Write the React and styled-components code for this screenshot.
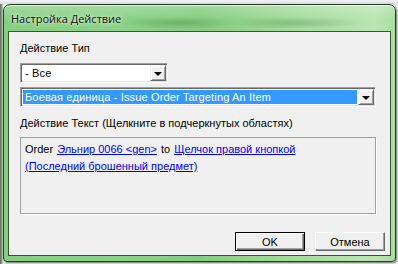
import styled, { createGlobalStyle } from "styled-components";

const GlobalStyle = createGlobalStyle`
  html, body {
    margin: 0;
    padding: 0;
  }
  body {
    background: #e6e6e6;
    font-family: "Liberation Sans", Arial, sans-serif;
  }
`;

const Desktop = styled.div`
    width: 398px;
    height: 264px;
    overflow: hidden;
    box-sizing: border-box;
    padding: 4px 0 0 3px;
    background:
        linear-gradient(180deg, #f4f4f4 0, #d9dce6 4px, transparent 4px),
        linear-gradient(90deg, #5d6e5b 0, #8aa487 2px, #ececec 3px);
`;

const Window = styled.div`
    width: 393px;
    height: 258px;
    box-sizing: border-box;
    border: 1px solid #2b3a2a;
    border-radius: 7px 7px 4px 4px;
    padding: 0 4px 5px;
    display: flex;
    flex-direction: column;
    background:
        radial-gradient(ellipse 60px 6px at 175px 18px, rgba(70, 120, 70, 0.35), transparent),
        radial-gradient(ellipse 70px 6px at 290px 18px, rgba(70, 120, 70, 0.3), transparent),
        linear-gradient(180deg, rgba(255, 255, 255, 0.25), rgba(255, 255, 255, 0) 14px),
        linear-gradient(90deg, #86cf80 0%, #8bd286 30%, #84cd7f 50%, #a4dc9c 75%, #b9e6b1 95%, #a8dea0 100%);
    box-shadow: 1px 1px 2px rgba(0, 0, 0, 0.5), inset 0 1px 0 rgba(255, 255, 255, 0.6);
`;

const TitleBar = styled.div`
    height: 26px;
    display: flex;
    align-items: center;
    padding-left: 3px;
    font-family: "Open Sans", "Noto Sans", sans-serif;
    font-size: 11px;
    color: #101010;
    text-shadow: 0 0 6px rgba(255, 255, 255, 0.9), 0 0 3px rgba(255, 255, 255, 0.7);
`;

const Client = styled.div`
    flex: 1;
    display: flex;
    flex-direction: column;
    border: 1px solid #3a5437;
    background: #f0f0f0;
    padding: 0 5px 4px 11px;
    font-size: 11px;
    color: #000;
`;

const Label = styled.div`
    margin-top: ${p => p.$gap}px;
    line-height: 13px;
    white-space: nowrap;
`;

const Combo = styled.div`
    display: flex;
    width: ${p => p.$width}px;
    height: 20px;
    box-sizing: border-box;
    margin-top: ${p => p.$gap}px;
    padding: 1px;
    background: #fff;
    border: 1px solid;
    border-color: #a0a0a0 #fff #fff #a0a0a0;
    box-shadow: inset 1px 1px 0 #696969, inset -1px -1px 0 #e3e3e3;
`;

const ComboValue = styled.div`
    flex: 1;
    margin: 1px;
    padding-left: 2px;
    display: flex;
    align-items: center;
    white-space: nowrap;
    overflow: hidden;
    letter-spacing: 0.15px;
    background: ${p => (p.$selected ? "#3399ff" : "transparent")};
    color: ${p => (p.$selected ? "#fff" : "#000")};
`;

const DropButton = styled.div`
    width: 16px;
    box-sizing: border-box;
    display: flex;
    align-items: center;
    justify-content: center;
    background: #f0f0f0;
    border: 1px solid;
    border-color: #f0f0f0 #696969 #696969 #f0f0f0;
    box-shadow: inset 1px 1px 0 #fff, inset -1px -1px 0 #a0a0a0;
`;

const Arrow = styled.div`
    width: 0;
    height: 0;
    border-left: 4px solid transparent;
    border-right: 4px solid transparent;
    border-top: 4px solid #000;
    margin-top: 1px;
`;

const TextBox = styled.div`
    width: 356px;
    height: 77px;
    box-sizing: border-box;
    margin-top: 7px;
    padding: 3px 4px;
    border: 1px solid #a0a0a0;
    box-shadow: 1px 1px 0 #fff;
    line-height: 17px;
`;

const Word = styled.span`
    margin-right: 4px;
`;

const Link = styled.a`
    color: #0000ff;
    text-decoration: underline;
    cursor: pointer;
    margin-right: 4px;
`;

const ButtonRow = styled.div`
    margin-top: auto;
    display: flex;
    justify-content: flex-end;
    gap: 10px;
`;

const Button = styled.button`
    width: 70px;
    height: 19px;
    box-sizing: border-box;
    padding: 0;
    font-family: "Liberation Sans", Arial, sans-serif;
    font-size: 11px;
    color: #000;
    background: #f0f0f0;
    border: 1px solid;
    border-color: ${p => (p.$default ? "#000" : "#fff #696969 #696969 #fff")};
    box-shadow: ${p =>
        p.$default
            ? "inset 1px 1px 0 #fff, inset -1px -1px 0 #696969, inset -2px -2px 0 #a0a0a0"
            : "inset -1px -1px 0 #a0a0a0"};
`;

const ComboBox = ({ width, gap, value, selected }) => (
    <Combo $width={width} $gap={gap}>
        <ComboValue $selected={selected}>{value}</ComboValue>
        <DropButton>
            <Arrow />
        </DropButton>
    </Combo>
);

const App = () => {
    return (
        <Desktop>
            <GlobalStyle />
            <Window>
                <TitleBar>Настройка Действие</TitleBar>
                <Client>
                    <Label $gap={10}>Действие Тип</Label>
                    <ComboBox width={148} gap={8} value="- Все" />
                    <ComboBox
                        width={356}
                        gap={4}
                        value="Боевая единица - Issue Order Targeting An Item"
                        selected
                    />
                    <Label $gap={10}>Действие Текст (Щелкните в подчеркнутых областях)</Label>
                    <TextBox>
                        <Word>Order</Word>
                        <Link>Эльнир 0066 &lt;gen&gt;</Link>
                        <Word>to</Word>
                        <Link>Щелчок правой кнопкой</Link>
                        <br />
                        <Link>(Последний брошенный предмет)</Link>
                    </TextBox>
                    <ButtonRow>
                        <Button $default>OK</Button>
                        <Button>Отмена</Button>
                    </ButtonRow>
                </Client>
            </Window>
        </Desktop>
    );
};

export default App;
